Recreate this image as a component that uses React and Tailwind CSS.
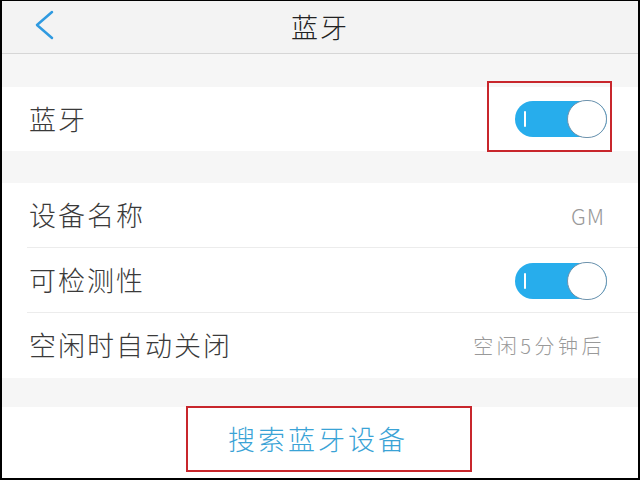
import React from 'react';

const Toggle = ({ marked }) => (
  <div className="relative">
    <div className="relative w-[92px] h-[36px] rounded-full bg-[#27adec] flex items-center">
      <div className="ml-[9px] w-[2px] h-[16px] bg-white rounded" />
      <div className="absolute right-0 -top-px w-[40px] h-[38px] rounded-full bg-white border border-[#6f93ad]" />
    </div>
    {marked && (
      <div className="absolute -left-[28px] -right-[5px] -top-[20px] -bottom-[15px] border-2 border-[#c8262c]" />
    )}
  </div>
);

const Row = ({ label, children, divider }) => (
  <div className="relative flex items-center justify-between h-[65px] pl-[27px] pr-[33px]">
    <span className="text-[27px] font-light tracking-[2px] text-[#3a3a3a]">{label}</span>
    {children}
    {divider && <div className="absolute left-[25px] right-0 bottom-0 h-px bg-[#ececec]" />}
  </div>
);

const App = () => {
  return (
    <div
      className="w-[640px] h-[480px] overflow-hidden bg-[#f6f6f6] border-x-2 border-t border-b-2 border-black flex flex-col"
      style={{ fontFamily: '"Noto Sans CJK SC", "Noto Sans", sans-serif' }}
    >
      <header className="relative h-[53px] shrink-0 bg-[#f3f3f3] border-b border-[#d6d6d6] flex items-center justify-center">
        <svg className="absolute left-[31px] top-[9px]" width="22" height="30" viewBox="0 0 22 30">
          <path d="M19 2 L4 15 L19 28" fill="none" stroke="#2f9ae0" strokeWidth="2.5" strokeLinecap="round" strokeLinejoin="round" />
        </svg>
        <h1 className="text-[27px] font-light tracking-[2px] text-[#222]">蓝牙</h1>
      </header>

      <div className="h-[33px] shrink-0" />

      <section className="bg-white">
        <div className="flex items-center justify-between h-[64px] pl-[27px] pr-[31px]">
          <span className="text-[27px] font-light tracking-[2px] text-[#3a3a3a]">蓝牙</span>
          <Toggle marked />
        </div>
      </section>

      <div className="h-[32px] shrink-0" />

      <section className="bg-white">
        <Row label="设备名称" divider>
          <span className="text-[22px] font-light tracking-[1px] text-[#999]">GM</span>
        </Row>
        <Row label="可检测性" divider>
          <div className="mr-[-2px]">
            <Toggle />
          </div>
        </Row>
        <Row label="空闲时自动关闭">
          <span className="text-[20px] font-light tracking-[3.5px] text-[#999]">空闲5分钟后</span>
        </Row>
      </section>

      <div className="h-[29px] shrink-0" />

      <section className="flex-1 bg-white flex justify-center pl-[18px]">
        <div className="mt-[-1px] w-[286px] h-[66px] border-2 border-[#c8262c] flex items-center justify-center pr-[22px]">
          <span className="text-[27px] font-light tracking-[3px] text-[#3aa3d6]">搜索蓝牙设备</span>
        </div>
      </section>
    </div>
  );
};

export default App;
